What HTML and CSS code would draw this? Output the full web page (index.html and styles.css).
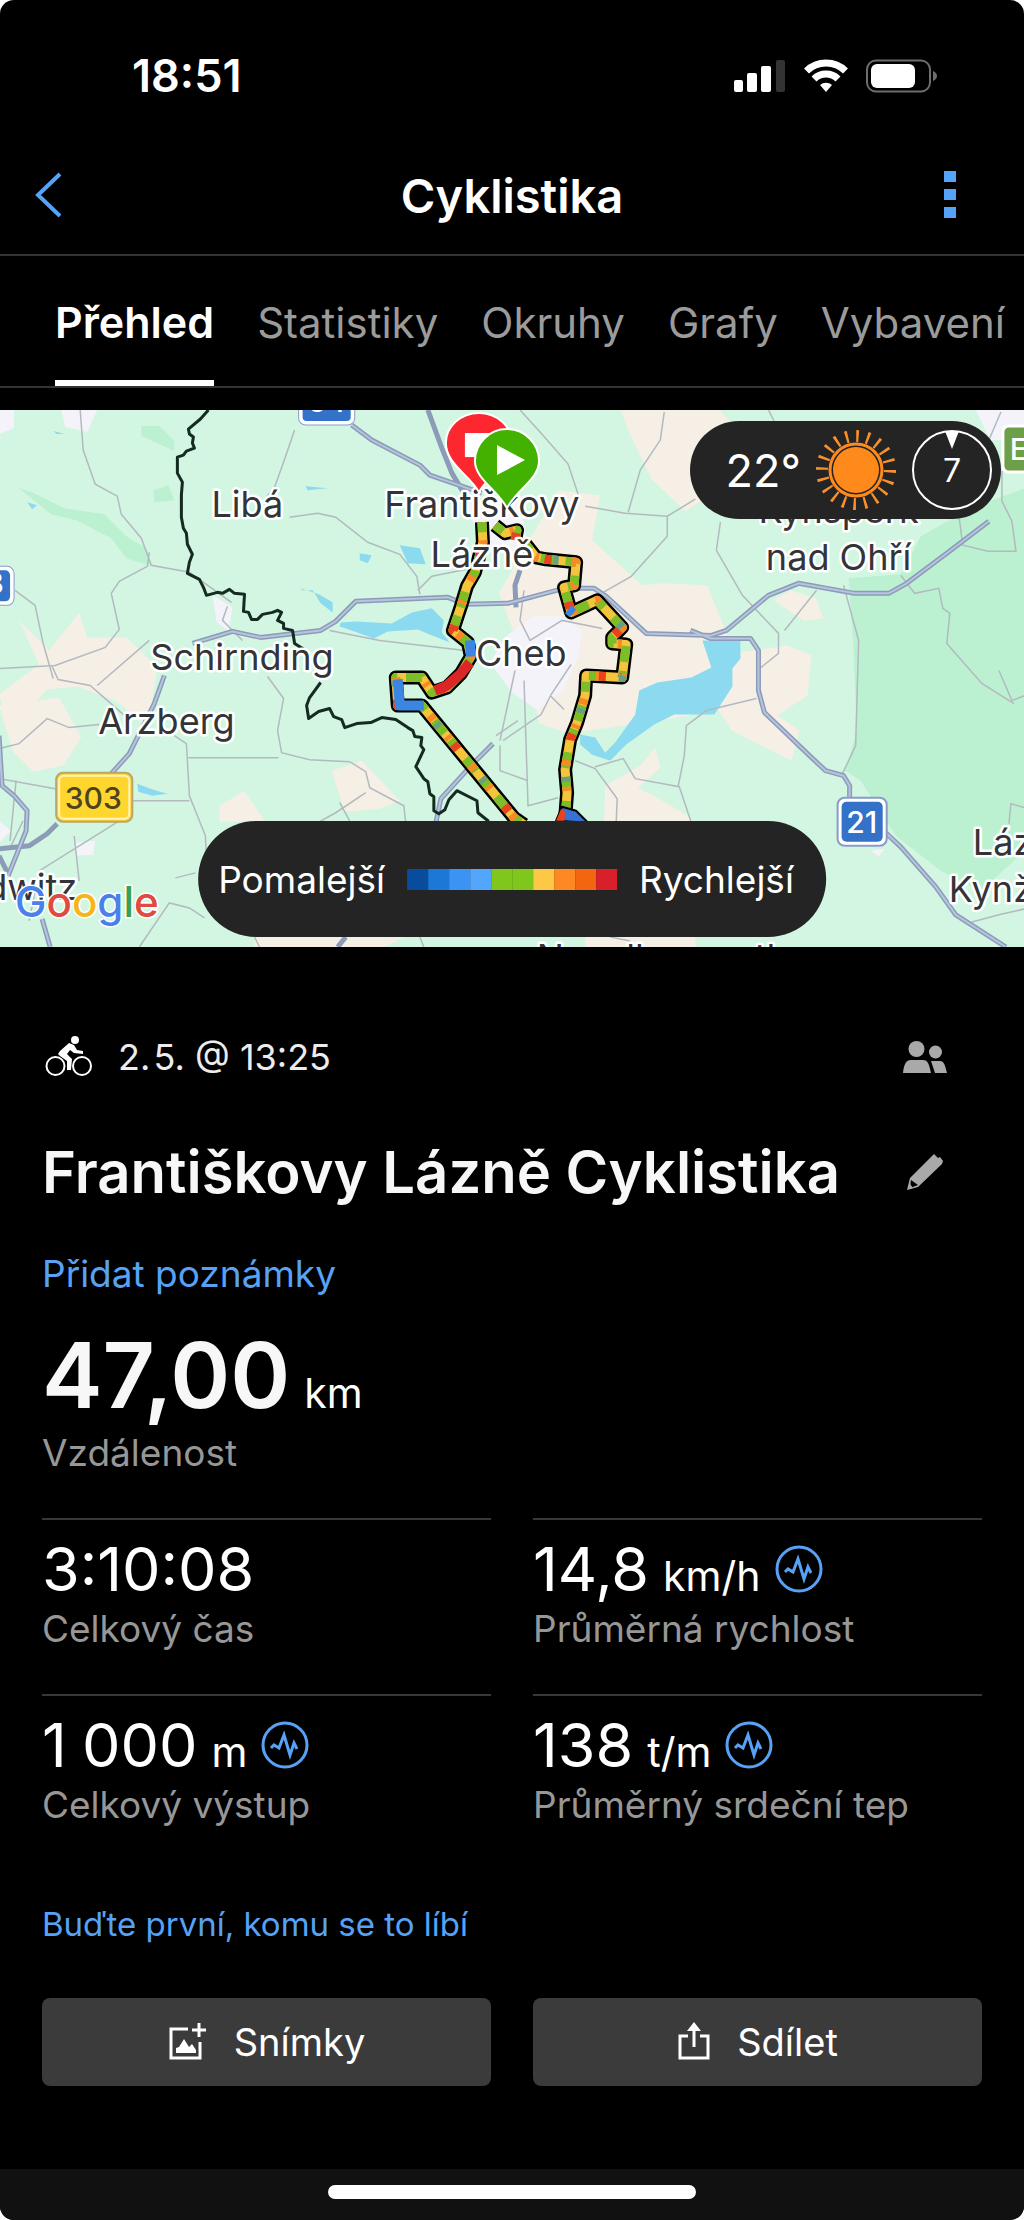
FILE: index.html
```html
<!DOCTYPE html>
<html lang="cs">
<head>
<meta charset="utf-8">
<meta name="viewport" content="width=device-width, initial-scale=1">
<title>Cyklistika</title>
<link rel="stylesheet" href="styles.css">
</head>
<body>
<div class="phone">
  <div class="status">
    <span class="clock">18:51</span>
    <span class="indicators">
      <svg width="52" height="34" viewBox="0 0 52 34" fill="#fff" aria-hidden="true"><rect x="0" y="21" width="9" height="12" rx="2"/><rect x="13" y="14" width="10" height="19" rx="2"/><rect x="27" y="7" width="10" height="26" rx="2"/><rect x="42" y="1" width="9" height="32" rx="2" fill="#333"/></svg>
      <svg width="44" height="34" viewBox="0 0 44 34" fill="none" stroke="#fff" stroke-width="7" aria-hidden="true"><path d="M2.500 12a28 28 0 0 1 39 0"/><path d="M10 20a17 17 0 0 1 24 0"/><path d="M22 33l-6-7a9 9 0 0 1 12 0z" fill="#fff" stroke="none"/></svg>
      <svg width="72" height="34" viewBox="0 0 72 34" fill="none" aria-hidden="true"><rect x="1" y="1.500" width="63" height="31" rx="9" stroke="#6e6e6e" stroke-width="2"/><rect x="5" y="5" width="44" height="24" rx="6" fill="#fff"/><path d="M67 12q4 2 4 5t-4 5z" fill="#6e6e6e"/></svg>
    </span>
  </div>

  <header class="topbar">
    <button class="icon-button" type="button" aria-label="Zpět"><svg width="28" height="46" viewBox="0 0 28 46" fill="none" stroke="#55a3f8" stroke-width="4"><path d="M26 2L4 23l22 21"/></svg></button>
    <h1>Cyklistika</h1>
    <button class="icon-button menu" type="button" aria-label="Další"><svg width="12" height="48" viewBox="0 0 12 48" fill="#55a3f8"><path d="M0 0h12v11H0zM0 18h12v11H0zM0 36h12v11H0z"/></svg></button>
  </header>

  <nav class="tabs">
    <a class="tab active" href="#prehled">Přehled</a>
    <a class="tab" href="#statistiky">Statistiky</a>
    <a class="tab" href="#okruhy">Okruhy</a>
    <a class="tab" href="#grafy">Grafy</a>
    <a class="tab" href="#vybaveni">Vybavení</a>
  </nav>

  <section class="map" aria-label="Mapa trasy">
    <svg class="map-canvas" viewBox="0 410 1024 536" preserveAspectRatio="xMidYMid slice">
      <rect y="410" width="1024" height="536" fill="#d2f6e2"/>
      <!-- forest -->
      <g fill="#bbf0d1">
        <path d="M848 578l52-4 20-38 50-28 54-20V850L980 890 940 870 895 835 860 780 845 770 856 730 853 650z"/>
        <path d="M0 481l35 12 30 15 40 6 22 22 20 12 5 18-25-8-15-20-35-18-25-6-32-26zM142 426l18 0 15 15v10l-33-15zM154 490l15-5 6 15-20 2z"/>
        <path d="M680 425l12-2 8 30-6 20-16-10z"/>
      </g>
      <!-- farmland -->
      <g fill="#f5efe5">
        <path d="M620 410h100l20 25-30 60-25 16-34-32-20-42z"/>
        <path d="M558 490l42 5-8 45 50 45 20-2 45 2 20 50-10 20 70-10 24 10-4 40-30 20 22 15-8 30-60-30-22-35-20 20-50 8-70 10-30-10-10-50-30-80z"/>
        <path d="M790 590l25 8 8 20-20 2-30-20zM605 785l35-20 15-18 5 20-22 20 15 8 35 20 30 35H603z"/>
        <path d="M20 620l30 30 30-38 8 25 40 0 30 30-10 60-30-26-40-15-30 3-38 40-10-35 40-30zM0 705l60-8 22 40-18 28-30 6-20-20zM332 770l30-10 38 40-20 8-35 3zM220 805l25-15 20 30-45 1zM255 936h150l-20 10H255zM585 936h110v10H585z"/>
      </g>
      <g fill="#f4f3f9">
        <path d="M0 410h15v18l-15 6zM62 410h36l-10 22-22-5zM213 595l20 12-4 24-12-10zM76 842l20-2-2 14-18 1zM0 820l12 10-12 12z"/>
        <path d="M506 636l26-20 30 0 20 14-4 26-14 32-26 22-26-18-22-30zM975 410h49v30l-35 0zM870 850l14-2-6 8zM460 500l60 0 10 60-40-10z"/>
      </g>
      <!-- water -->
      <g fill="#8cdaf0">
        <path d="M303 590l10 0 8 13 12 9v-10l-14-8-18-6zM341 622l16-1 35 2 20-11 20-4 12 12-2 12 8 10-20-8-12-5-30 2-14 7-22-8-12-4zM702 640h38v18l-8 10 0 18-18 28-40 0-20 10-28 20-16 16-18-6-12-10 0-10 15 3 10 15 10-10 20-28 4-24 18-8 34-5 20-10z"/>
        <path d="M360 553l12 2-4 8-8-3zM400 545l20 3 6 16-18-1zM138 783l16 6 14 4-15 2-14-4zM28 502l10 3-5 4zM306 486l22 2-20 2zM55 431l10 3-8 0z"/>
      </g>
      <!-- local roads -->
      <g fill="none" stroke="#b3b9c0" stroke-width="1.500">
        <path d="M81 410l3 40 12 34 22 12 4 18 20 24 10 27 38 7 42 30M150 552l-2 14-28 15-8 12 8 36-14 18-50 18-56 3M53 666l6 13 32 6 40 35M16 590l20 15 8 38 10 35"/>
        <path d="M295 430l-12 35-8 22-10 12M290 517l28-4 18 4 32 25 32 12 17 22 3 18M418 590l14-14 40-8M228 606l-5 14 20 20M330 630l50 10 85 10M268 676l16 22-6 32 4 22 28 7 40 2 16 10 4 16 34 18 2 18M189 757h90M175 735l12 8 3 52 16 40 2 50M133 800h57M98 685l52-45M0 748l20-5 28-25 22 9 30-3M0 778l56 10"/>
        <path d="M75 835l5 45M120 820l-80 50-10 50M366 792l-30 20-40 22M340 802l10 18M176 877l20-5M140 946l30-44 20 5 15 10M520 410l20 22 28 32 10 30M664 412l-4 28-20 30-12 42M585 506l40 7 42 3 28-17M667 516l0 20-36 40-35 20M720 522l-4 28 26 45 36 38v20l-20 16M816 590l-32 40M843 585l15 55-3 105-14 30M524 590l-4 30 10 20 32-20 40 8M515 670l-15 70"/>
        <path d="M496 735l22-15M503 740l38-26 10-20 20-30M524 680l4 125 30-8M500 745v25l28 10M575 760l20 8 22 30-1 24M595 766l28-8 12 20 44 8 12 36M678 785l6-30 2-30 20-15 50-12M550 695l14 14M956 500l6 45 25 6h28l-4-30-10-20v-30M900 575l14 18 24-5 4 20 7 5-3 30 35 40 32 20M998 670l13 30 13-5M971 921l30-8 23-5M1024 807l-14-4-2 20"/>
        <path d="M255 936l5 10M420 936l4 10M610 936l20 4M768 410l6 12M1000 412l-15 35M24 820l-12 25M17 780l-6 60"/>
      </g>
      <!-- main roads -->
      <g fill="none" stroke="#8b9bb8" stroke-width="5" stroke-linejoin="round">
        <path d="M352 425l20 15 48 25 10 10 52 18M428 410l14 38 10 25 15 25"/>
        <path d="M193 643l40-12 28 6 60-7 15-9 20-20 92-4 18 7 42-1 56-15 30 0 12 8 40 37 65 2 15-5 42-35 30-12 56 10h34l18-10 40-30 42-32M690 630l20 8h40l8 12v40l6 22 46 44 15 14 18 5 6 10v30M885 832l15 14 35 40 20 28 50 32M520 570l-5 15 1 22"/>
        <path d="M165 675l-10 28-25 50-18 20M0 735l3 50 12 10 13 15-1 20-8 20-10 25M0 848l30-3 18-12 10-10M43 918l8 28M346 936l-8 10M493 743l-20 20-32 35-5 24M0 855l8 16"/>
      </g>
      <g fill="none" stroke="#b7c4de" stroke-width="2" stroke-linejoin="round">
        <path d="M193 643l40-12 28 6 60-7 15-9 20-20 92-4 18 7 42-1 56-15 30 0 12 8 40 37 65 2 15-5 42-35 30-12 56 10h34l18-10 40-30 42-32M690 630l20 8h40l8 12v40l6 22 46 44 15 14 18 5 6 10v30M885 832l15 14 35 40 20 28 50 32"/>
        <path d="M352 425l20 15 48 25 10 10 52 18M165 675l-10 28-25 50-18 20M0 735l3 50 12 10 13 15-1 20-8 20-10 25M43 918l8 28M493 743l-20 20-32 35-5 24"/>
      </g>
      <!-- state border -->
      <path fill="none" stroke="#152a20" stroke-width="3" stroke-linejoin="round" d="M209 410l-8 9-12 10 1 5 4 3-1 6 2 5-8 3-3 4-6 2v16l5 9-1 13v22l2 11 3 5 1 11 5 10-3 8-2 11 12 6 4 8 3 8 11-3 5 1 7-4 5 4 10 1-1 17 5 1 3 7 6 0 5-5 10-2 5-2 4 2-4 8 6 3 0 5 9 2 2 13 8 5 5 8 9 7M321 682l-11 15-3 8 2 13 10-7 11-3 4 8 8 3 3 8 12-4 14-1 11-5 14 2 12 8 5 3 2 6 7 1-1 8 3 4-8 17 8 12 4 3 2 12 4 3v14l5 3 6-4 4-10 8-9 20 10 1 12 10 8 4 12"/>
      <!-- recorded track, coloured by speed -->
      <defs>
        <path id="track" d="M482 522l1 20-8 30-8 14-6 20-8 24 15 12 3 14-10 17-14 14-15 5-10-15h-26l2 28h24l92 112 10 7M495 525l10 8 12-3-2 10M524 542l12 15 10 2 30 3-2 23-10 2 7 25 26-12 25 27-10 10v6l14 1-4 33-36-2-1 20-8 27-7 17-5 30 2 23-2 26"/>
      </defs>
      <g fill="none" stroke-linejoin="round">
        <use href="#track" stroke="#000" stroke-width="14"/>
        <use href="#track" stroke="#f4c43c" stroke-width="9"/>
        <use href="#track" stroke="#7dbd28" stroke-width="9" stroke-dasharray="10 14 16 9"/>
        <use href="#track" stroke="#f58a26" stroke-width="9" stroke-dasharray="6 21 4 33" stroke-dashoffset="9"/>
        <use href="#track" stroke="#6a9f82" stroke-width="9" stroke-dasharray="5 66" stroke-dashoffset="34"/>
        <use href="#track" stroke="#e8431e" stroke-width="9" stroke-dasharray="7 73" stroke-dashoffset="52"/>
        <path d="M470 662l-9 11-14 12-12 5" stroke="#dc2626" stroke-width="10"/>
        <path d="M398 679l2 26h24M470 640l1 16M568 609l5 4" stroke="#3a86e0" stroke-width="10"/>
        <path d="M556 820l6-14 14 4 12 12z" fill="#3672d4" stroke="#000" stroke-width="2"/>
        <path d="M556 820l5-12 5 4-2 8z" fill="#e8431e"/>
      </g>
      <!-- place names -->
      <g class="place">
        <text x="212" y="517">Libá</text>
        <text x="151" y="670">Schirnding</text>
        <text x="99" y="733">Arzberg</text>
        <text x="482" y="517" text-anchor="middle">Františkovy</text>
        <text x="482" y="567" text-anchor="middle">Lázně</text>
        <text x="476" y="666">Cheb</text>
        <text x="838" y="523" text-anchor="middle">Kynšperk</text>
        <text x="838" y="570" text-anchor="middle">nad Ohří</text>
        <text x="972" y="854">Lázně</text>
        <text x="948" y="901">Kynžvart</text>
        <text x="78" y="899" text-anchor="end">Marktredwitz</text>
        <text x="662" y="969" text-anchor="middle">Neualbenreuth</text>
      </g>
      <!-- road shields -->
      <g class="shield" text-anchor="middle">
        <rect x="299" y="380" width="56" height="45" rx="7" fill="#fff" stroke="#8b9bc8"/><rect x="303" y="380" width="48" height="41" rx="4" fill="#3471c8"/><text x="327" y="412">64</text>
        <rect x="-20" y="566" width="35" height="39" rx="7" fill="#fff" stroke="#8b9bc8"/><rect x="-20" y="570" width="31" height="31" rx="5" fill="#3471c8"/><text x="-14" y="594">93</text>
        <rect x="57" y="772" width="76" height="49" rx="7" fill="#ffd62e" stroke="#b9a668" stroke-width="2"/><rect x="60" y="775" width="70" height="43" rx="5" fill="none" stroke="#fff3c0" stroke-width="2"/><text class="dark" x="94" y="808">303</text>
        <rect x="837" y="797" width="49" height="48" rx="7" fill="#fff" stroke="#8b9bc8" stroke-width="2"/><rect x="841" y="801" width="41" height="40" rx="5" fill="#3471c8"/><text x="861" y="832">21</text>
        <rect x="1002" y="426" width="60" height="46" rx="6" fill="#6d9f49" stroke="#fff" stroke-width="3"/><text x="1018" y="460">E</text>
      </g>
      <!-- finish and start pins -->
      <g stroke="#fff" stroke-width="2">
        <path fill="#fd2730" d="M479 492C470 475 446 464 446 443a33 30 0 0 1 66 0c0 21-24 32-33 49z"/>
        <path fill="#fff" stroke="none" d="M465 433h28v24h-28z"/>
        <path fill="#42b100" d="M507 508C498 490 475 479 475 461a32 32 0 0 1 64 0c0 18-23 29-32 47z"/>
        <path fill="#fff" stroke="none" d="M497 445l28 15-28 15z"/>
      </g>
      <text class="google" x="16" y="916"><tspan fill="#4a80ea">G</tspan><tspan fill="#dd4b41">o</tspan><tspan fill="#f4b61c">o</tspan><tspan fill="#4a80ea">g</tspan><tspan fill="#36a057">l</tspan><tspan fill="#dd4b41">e</tspan></text>
    </svg>

    <div class="weather">
      <span class="temp">22°</span>
      <svg width="80" height="80" viewBox="0 0 80 80" aria-label="Slunečno"><circle cx="40" cy="40" r="34" fill="none" stroke="#f9902b" stroke-width="12" stroke-dasharray="2.500 8.180" /><circle cx="40" cy="40" r="26" fill="#242424" stroke="#ff8b1e" stroke-width="3"/><circle cx="40" cy="40" r="23" fill="#ff8a1c"/></svg>
      <svg width="82" height="82" viewBox="0 0 82 82" aria-label="Vítr 7"><circle cx="41" cy="41" r="39" fill="none" stroke="#fff" stroke-width="2"/><path d="M34 2h14l-7 18z" fill="#fff"/><text class="wind" x="41" y="53" text-anchor="middle">7</text></svg>
    </div>

    <div class="legend">
      <span>Pomalejší</span>
      <span class="scale"><i class="c1"></i><i class="c2"></i><i class="c3"></i><i class="c4"></i><i class="c5"></i><i class="c5"></i><i class="c6"></i><i class="c7"></i><i class="c8"></i><i class="c9"></i></span>
      <span>Rychlejší</span>
    </div>
  </section>

  <main class="content">
    <div class="meta">
      <svg width="50" height="44" viewBox="0 0 50 44" fill="none" stroke="#fff" stroke-width="2" aria-hidden="true"><circle cx="13.500" cy="31" r="9"/><circle cx="40" cy="31" r="9"/><circle cx="33" cy="5" r="4" fill="#fff" stroke="none"/><path d="M18 16l9-8 5 2 3 5 6 1v3l-9-1-4-3-3 4 5 5-1 11h-4V26l-7-5-2-2z" fill="#fff" stroke="none"/></svg>
      <time>2.&#8202;5. @ 13:25</time>
      <button class="plain" type="button" aria-label="Soukromí"><svg width="44" height="32" viewBox="0 0 44 32" fill="#a9a9a9"><circle cx="13.500" cy="8" r="8"/><circle cx="32.500" cy="11" r="6.500"/><path d="M0 32c1-9 3-13 8-13h12c5 0 6 4 8 13zM28 20h9c4 0 5 4 7 12H32z"/></svg></button>
    </div>
    <div class="name">
      <h2>Františkovy Lázně Cyklistika</h2>
      <button class="plain edit" type="button" aria-label="Upravit název"><svg width="38" height="38" viewBox="0 0 38 38"><path d="M28 1l4 4 2-1 3 4-1 3L12 34 1 37l3-12z" fill="#a9a9a9"/><path d="M5 27l7 5-8 3z" fill="#000"/><path d="M2 36l2-5 3 4z" fill="#a9a9a9"/></svg></button>
    </div>
    <a class="notes" href="#poznamky">Přidat poznámky</a>
    <div class="distance"><span class="big">47,00</span><span class="unit">km</span></div>
    <div class="label">Vzdálenost</div>

    <div class="stats">
      <div class="stat"><div class="value">3:10:08</div><div class="label">Celkový čas</div></div>
      <div class="stat"><div class="value">14,8 <span class="unit">km/h</span><svg class="pulse" viewBox="0 0 48 48"><circle cx="24" cy="24" r="22"/><path d="M10 27l3-3 5 3 5-13 6 20 4-12 3 6"/></svg></div><div class="label">Průměrná rychlost</div></div>
      <div class="stat"><div class="value">1&#8197;000 <span class="unit">m</span><svg class="pulse" viewBox="0 0 48 48"><circle cx="24" cy="24" r="22"/><path d="M10 27l3-3 5 3 5-13 6 20 4-12 3 6"/></svg></div><div class="label">Celkový výstup</div></div>
      <div class="stat"><div class="value">138 <span class="unit">t/m</span><svg class="pulse" viewBox="0 0 48 48"><circle cx="24" cy="24" r="22"/><path d="M10 27l3-3 5 3 5-13 6 20 4-12 3 6"/></svg></div><div class="label">Průměrný srdeční tep</div></div>
    </div>

    <a class="like" href="#libi">Buďte první, komu se to líbí</a>
    <div class="actions">
      <button class="action" type="button"><svg width="40" height="40" viewBox="0 0 40 40" fill="none" stroke="#fff" stroke-width="3" aria-hidden="true"><path d="M20 7H3v29h29V20M31 1v14M24 8h14"/><path d="M8 31v-5l3-1 5-8 5 8 3-3 4 6v3z" fill="#fff" stroke="none"/></svg>Snímky</button>
      <button class="action" type="button"><svg width="34" height="40" viewBox="0 0 34 40" fill="none" stroke="#fff" stroke-width="3" aria-hidden="true"><path d="M11 14H3v22h28V14h-8M17 25V5"/><path d="M17 0l7 9H10z" fill="#fff" stroke="none"/></svg>Sdílet</button>
    </div>
  </main>

  <footer class="home"><span class="handle"></span></footer>
</div>
</body>
</html>
```
FILE: styles.css
```css
* { box-sizing: border-box; }
body { margin: 0; background: #fff; color: #fff; font-family: Inter, "Liberation Sans", sans-serif; }
svg { display: block; flex: none; }
button { border: 0; margin: 0; padding: 0; background: none; color: inherit; font: inherit; cursor: pointer; }
a { text-decoration: none; }
h1, h2 { margin: 0; }

.phone { background: #000; border-radius: 14px; overflow: hidden; }

.status { display: flex; justify-content: space-between; padding: 48px 86px 32px 132px; line-height: 56px; }
.clock { font-size: 45px; font-weight: 600; }
.indicators { display: flex; align-items: center; gap: 18px; }

.topbar { display: grid; grid-template-columns: 1fr auto 1fr; align-items: center; height: 120px; padding: 0 34px; border-bottom: 2px solid #333; }
.topbar h1 { font-size: 47px; font-weight: 600; }
.icon-button { width: 80px; display: flex; }
.menu { justify-content: center; justify-self: end; }

.tabs { display: flex; gap: 43px; height: 132px; padding-left: 55px; border-bottom: 2px solid #333; overflow: hidden; }
.tab { display: flex; align-items: center; padding-top: 8px; border-bottom: 6px solid transparent; font-size: 42px; color: #9b9b9b; white-space: nowrap; }
.tab.active { color: #fff; font-size: 43px; font-weight: 600; border-bottom-color: #fff; }

.map { position: relative; margin-top: 22px; height: 537px; overflow: hidden; }
.map-canvas { width: 100%; height: 100%; }
.place { font-size: 36px; fill: #333438; stroke: #fff; stroke-width: 5px; stroke-linejoin: round; paint-order: stroke; }
.shield { font-size: 30px; font-weight: 500; fill: #fff; }
.dark { fill: #4d4320; }
.google { font-size: 42px; font-weight: 500; stroke: #fff; stroke-width: 3px; paint-order: stroke; }
.weather { position: absolute; top: 11px; right: 23px; display: flex; align-items: center; gap: 15px; height: 98px; padding: 0 8px 0 36px; border-radius: 49px; background: #242424; }
.temp { font-size: 45px; }
.wind { font-size: 32px; fill: #fff; }
.legend { position: absolute; bottom: 10px; left: 50%; transform: translateX(-50%); display: flex; align-items: center; gap: 22px; height: 116px; padding: 0 32px 0 20px; border-radius: 58px; background: #242424; font-size: 37px; white-space: nowrap; }
.scale { display: flex; }
.scale i { width: 21px; height: 21px; }
.c1 { background: #084c9e; }
.c2 { background: #1b78d6; }
.c3 { background: #3b94f3; }
.c4 { background: #52a6fc; }
.c5 { background: #7fc71c; }
.c6 { background: #fec847; }
.c7 { background: #fe8924; }
.c8 { background: #f26511; }
.c9 { background: #d91f2a; }

.content { padding: 70px 42px 0; }
.meta { display: flex; align-items: center; gap: 26px; height: 80px; padding-right: 35px; font-size: 36px; color: #ececec; }
.meta .plain { margin-left: auto; }
.name { display: flex; align-items: center; justify-content: space-between; margin-top: 39px; padding-right: 38px; }
.name h2 { font-size: 58px; line-height: 72px; font-weight: 600; color: #f7f7f7; }
.notes { display: block; margin-top: 42px; font-size: 37px; line-height: 48px; color: #57a2f5; }
.distance { display: flex; align-items: baseline; gap: 14px; height: 96px; margin-top: 29px; line-height: 96px; }
.big { font-size: 91px; font-weight: 600; color: #f7f7f7; }
.unit { font-size: 41px; }
.distance + .label { margin-top: 6px; }
.label { font-size: 37px; line-height: 48px; color: #979797; }

.stats { display: grid; grid-template-columns: 1fr 1fr; column-gap: 42px; margin-top: 41px; }
.stat { padding: 13px 0 41px; border-top: 2px solid #383838; }
.value { display: flex; align-items: baseline; gap: 14px; height: 72px; font-size: 61px; line-height: 72px; }
.pulse { align-self: center; width: 48px; height: 48px; fill: none; stroke: #57a2f5; stroke-width: 3px; }

.like { display: block; margin-top: 30px; font-size: 33px; line-height: 48px; color: #57a2f5; }
.actions { display: grid; grid-template-columns: 1fr 1fr; gap: 42px; margin-top: 50px; }
.action { display: flex; align-items: center; justify-content: center; gap: 26px; height: 88px; border-radius: 8px; background: #3b3b3b; font-size: 38px; }

.home { display: flex; justify-content: center; align-items: center; height: 51px; margin-top: 83px; padding-bottom: 6px; background: #111; }
.handle { width: 36%; height: 14px; border-radius: 7px; background: #fff; }
```
